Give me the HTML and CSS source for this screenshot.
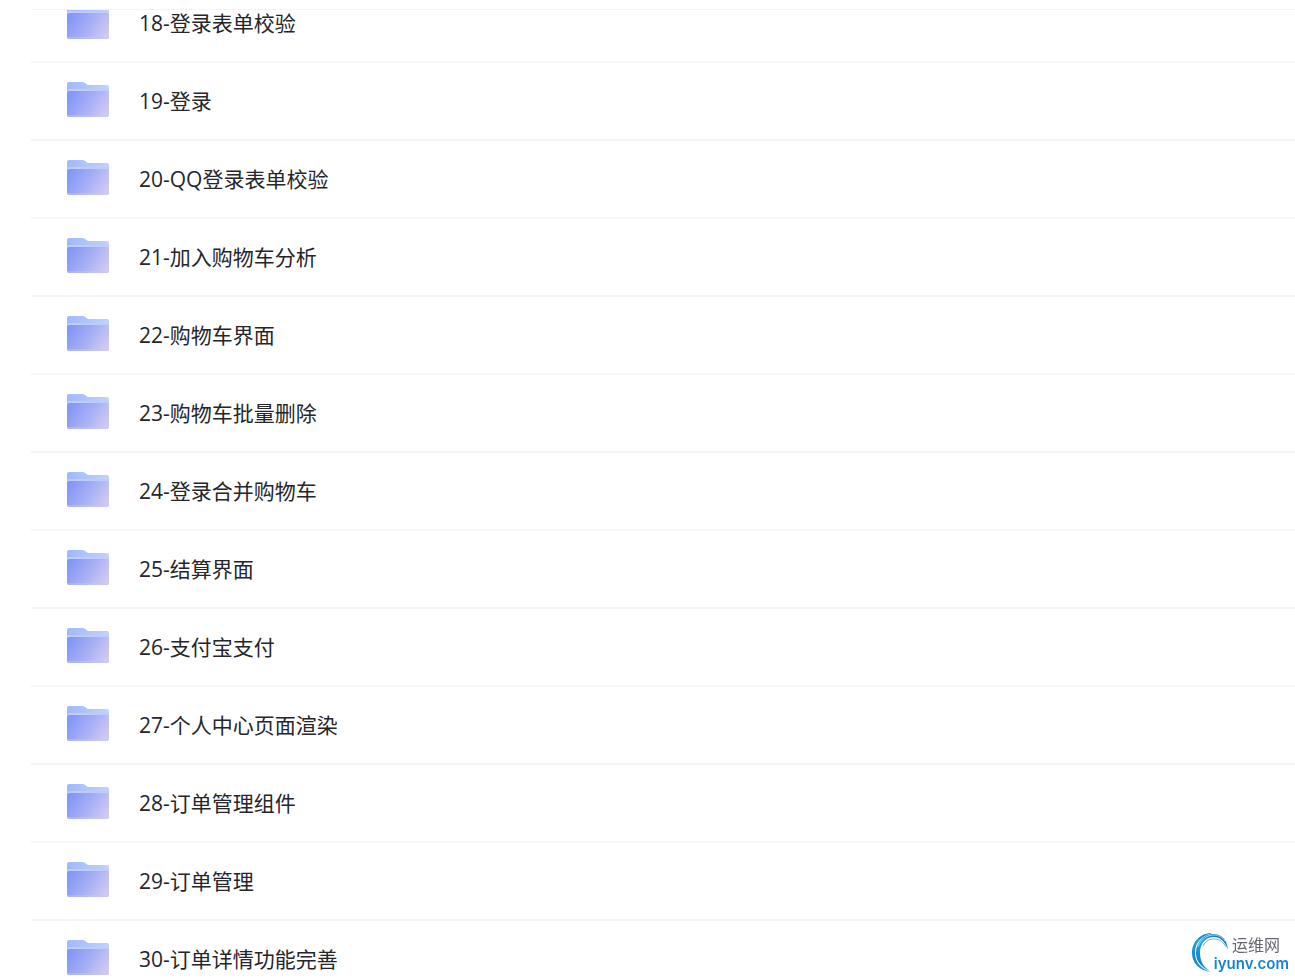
FILE: index.html
```html
<!DOCTYPE html>
<html lang="zh-CN">
<head>
    <meta charset="utf-8">
    <title>文件列表</title>
    <link rel="stylesheet" href="styles.css">
</head>
<body>
    <!-- shared folder icon -->
    <svg class="defs" width="0" height="0" aria-hidden="true">
        <defs>
            <linearGradient id="back" x1="0" y1="0" x2="1" y2="0">
                <stop offset="0" stop-color="#9fb9fc"/>
                <stop offset="1" stop-color="#c3d2fb"/>
            </linearGradient>
            <linearGradient id="front" x1="0" y1="0.3" x2="1" y2="0.7">
                <stop offset="0" stop-color="#8397f8"/>
                <stop offset="0.5" stop-color="#a5aff4"/>
                <stop offset="1" stop-color="#d0c9f2"/>
            </linearGradient>
            <symbol id="folder" viewBox="0 0 42 35">
                <path fill="url(#back)" d="M2 0H15Q17 0 18.500 1.200L20 2.400Q21 3 23 3H40Q42 3 42 5V20H0V2Q0 0 2 0Z"/>
                <path fill="#bccdfd" d="M0 9Q0 7 2 7H40Q42 7 42 9V14H0Z"/>
                <path fill="url(#front)" d="M0 11Q0 9 2 9H40Q42 9 42 11V33Q42 35 40 35H2Q0 35 0 33Z"/>
                <path fill="#c4c9f8" opacity="0.4" d="M0 33H42Q42 35 40 35H2Q0 35 0 33Z"/>
            </symbol>
        </defs>
    </svg>

    <main class="panel">
        <ul class="file-list">
            <li class="file"><svg class="icon"><use href="#folder"/></svg><span class="name">18-登录表单校验</span></li>
            <li class="file"><svg class="icon"><use href="#folder"/></svg><span class="name">19-登录</span></li>
            <li class="file"><svg class="icon"><use href="#folder"/></svg><span class="name">20-QQ登录表单校验</span></li>
            <li class="file"><svg class="icon"><use href="#folder"/></svg><span class="name">21-加入购物车分析</span></li>
            <li class="file"><svg class="icon"><use href="#folder"/></svg><span class="name">22-购物车界面</span></li>
            <li class="file"><svg class="icon"><use href="#folder"/></svg><span class="name">23-购物车批量删除</span></li>
            <li class="file"><svg class="icon"><use href="#folder"/></svg><span class="name">24-登录合并购物车</span></li>
            <li class="file"><svg class="icon"><use href="#folder"/></svg><span class="name">25-结算界面</span></li>
            <li class="file"><svg class="icon"><use href="#folder"/></svg><span class="name">26-支付宝支付</span></li>
            <li class="file"><svg class="icon"><use href="#folder"/></svg><span class="name">27-个人中心页面渲染</span></li>
            <li class="file"><svg class="icon"><use href="#folder"/></svg><span class="name">28-订单管理组件</span></li>
            <li class="file"><svg class="icon"><use href="#folder"/></svg><span class="name">29-订单管理</span></li>
            <li class="file"><svg class="icon"><use href="#folder"/></svg><span class="name">30-订单详情功能完善</span></li>
        </ul>
    </main>

    <div class="watermark">
        <svg class="swirl" viewBox="0 0 38 42" aria-hidden="true">
            <defs>
                <linearGradient id="ring" x1="0" y1="1" x2="1" y2="0">
                    <stop offset="0" stop-color="#1674c4"/>
                    <stop offset="0.5" stop-color="#19a5e6"/>
                    <stop offset="1" stop-color="#1c5f9f"/>
                </linearGradient>
            </defs>
            <path fill="url(#ring)" d="M19 39C8 38 0 30 0 20C0 9 8 0 20 0C9 3 3 10 3 20C3 29 9 36 19 39Z"/>
            <path fill="url(#ring)" d="M18 38C9 34 4 28 4 20C4 9 12 1 21 1C30 1 35 7 36 17C33 8 28 4 22 4C14 4 8 10 8 20C8 27 11 34 18 38Z"/>
            <path fill="none" stroke="#54bdec" stroke-width="1" d="M11 13C14 7 18 6 23 6C28 6 31 9 34 14"/>
            <path fill="none" stroke="#fff" stroke-width="0.6" d="M6 14C9 6 15 2 22 2C27 2 31 5 33 8"/>
        </svg>
        <span class="site">运维网</span>
        <span class="domain">iyunv.com</span>
    </div>
</body>
</html>
```

FILE: styles.css
```css
* {
    box-sizing: border-box;
}
body {
    margin: 0;
    background: #fff;
    color: #25262b;
    font-family: "Open Sans", "Noto Sans CJK SC", sans-serif;
}
.defs {
    position: absolute;
}
.panel {
    height: 100vh;
    padding: 9px 0 0 31px;
    overflow: hidden;
}
.file-list {
    margin: 0;
    padding: 0;
    list-style: none;
    border-top: 1px solid #f5f5f6;
    overflow: hidden;
}
.file {
    display: flex;
    align-items: center;
    gap: 30px;
    height: 78px;
    padding: 0 36px 3px;
    border-bottom: 2px solid #f5f5f6;
}
/* the first row is partly scrolled out of the list */
.file:first-child {
    margin-top: -25px;
}
.icon {
    flex: none;
    width: 42px;
    height: 35px;
}
.name {
    padding-top: 2px;
    font-size: 21px;
    line-height: 30px;
    white-space: nowrap;
}
.watermark {
    position: fixed;
    right: 6px;
    bottom: 5px;
    display: grid;
    grid-template-columns: 18px 22px 57px;
    grid-template-rows: 22px 20px;
}
.swirl {
    grid-area: 1 / 1 / 3 / 3;
    width: 38px;
    height: 42px;
}
.site {
    grid-area: 1 / 3;
    color: #66686f;
    font-size: 16px;
    line-height: 24px;
    white-space: nowrap;
}
.domain {
    grid-area: 2 / 2 / 3 / 4;
    justify-self: end;
    color: #1683d3;
    font-family: Inter, "Liberation Sans", sans-serif;
    font-size: 15px;
    font-weight: 600;
    line-height: 18px;
}
```
